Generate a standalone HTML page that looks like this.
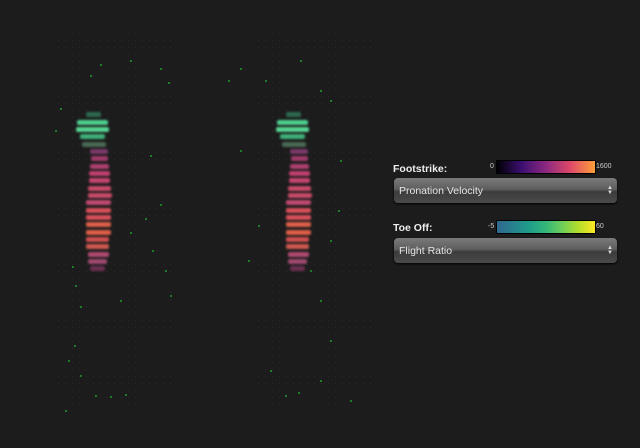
<!DOCTYPE html>
<html><head><style>
html,body{margin:0;padding:0;background:#1c1c1c;width:640px;height:448px;overflow:hidden;font-family:"Liberation Sans",sans-serif}
.b{position:absolute;height:5px;border-radius:2px;filter:blur(1px)}
.d{position:absolute;width:2px;height:2px;background:#1f7a2a}
.lbl{position:absolute;color:#eee;font-weight:bold;font-size:10.5px}
.sm{position:absolute;color:#ccc;font-size:7px}
.cb{position:absolute;left:496px;width:98px;height:12px;border:1px solid #000}
.sel{position:absolute;left:394px;width:223px;height:25px;border-radius:4px;
background:linear-gradient(#7a7a7a 0%,#5e5e5e 45%,#3c3c3c 55%,#4a4a4a 100%);box-shadow:0 1px 2px #000}
.sel span{position:absolute;left:5px;top:7px;color:#e6e6e6;font-size:10.5px}
.sel i{position:absolute;right:4px;top:8px;color:#ddd;font-size:6px;line-height:5px;font-style:normal}
.grid{position:absolute;background-image:radial-gradient(#2a2a2a 0.6px,transparent 0.8px);background-size:7px 7px}
</style></head><body>
<div class="grid" style="left:55px;top:30px;width:120px;height:380px"></div>
<div class="grid" style="left:255px;top:30px;width:120px;height:380px"></div>
<div id="f"></div>
<div class="lbl" style="left:393px;top:163px">Footstrike:</div>
<div class="sm" style="left:490px;top:163px">0</div>
<div class="cb" style="top:160px;background:linear-gradient(90deg,#000004,#3b0f70,#8c2981,#de4968,#fe9f3a)"></div>
<div class="sm" style="left:596px;top:163px">1600</div>
<div class="sel" style="top:178px"><span>Pronation Velocity</span><i>▲<br>▼</i></div>
<div class="lbl" style="left:393px;top:222px">Toe Off:</div>
<div class="sm" style="left:488px;top:223px">-5</div>
<div class="cb" style="top:220px;background:linear-gradient(90deg,#31688e,#26828e,#1f9e89,#35b779,#6ece58,#b5de2b,#fde725)"></div>
<div class="sm" style="left:596px;top:223px">60</div>
<div class="sel" style="top:238px"><span>Flight Ratio</span><i>▲<br>▼</i></div>
<script>
var rows=[[112,86,15,'#2f6a50'],[120,77,31,'#4fd08f'],[127,76,33,'#55d592'],[134,80,25,'#3fb07a'],[142,82,24,'#4a6a55'],
[149,90,18,'#7a3a6a'],[156,91,17,'#a03a6a'],[164,90,19,'#b04070'],[171,89,21,'#c04070'],[178,89,21,'#c84570'],
[186,88,23,'#c84a6a'],[193,88,24,'#c84a6a'],[200,86,25,'#c04a70'],[208,86,25,'#d8505a'],[215,86,25,'#d8505a'],
[222,86,25,'#e0604a'],[230,86,25,'#e06048'],[237,86,23,'#d05050'],[244,86,23,'#d05a50'],[252,88,21,'#b04a70'],
[259,88,19,'#a04a70'],[266,90,15,'#6a3050']];
var h='';
[0,200].forEach(function(o){rows.forEach(function(r){h+='<div class="b" style="left:'+(r[1]+o)+'px;top:'+r[0]+'px;width:'+r[2]+'px;background:'+r[3]+'"></div>';});});
var dots=[[60,108],[55,130],[72,266],[75,285],[80,306],[90,75],[100,64],[130,60],[160,68],[168,82],[150,155],[160,204],[145,218],[130,232],[152,250],[165,270],[170,295],[120,300],[68,360],[80,375],[95,395],[110,396],[125,394],[74,345],[65,410],[228,80],[240,68],[265,80],[300,60],[320,90],[330,100],[340,160],[338,210],[330,240],[310,270],[320,300],[258,225],[270,370],[285,395],[298,392],[320,380],[330,340],[350,400],[240,150],[248,260]];
dots.forEach(function(d){h+='<div class="d" style="left:'+d[0]+'px;top:'+d[1]+'px"></div>';});
document.getElementById('f').innerHTML=h;
</script>
</body></html>
